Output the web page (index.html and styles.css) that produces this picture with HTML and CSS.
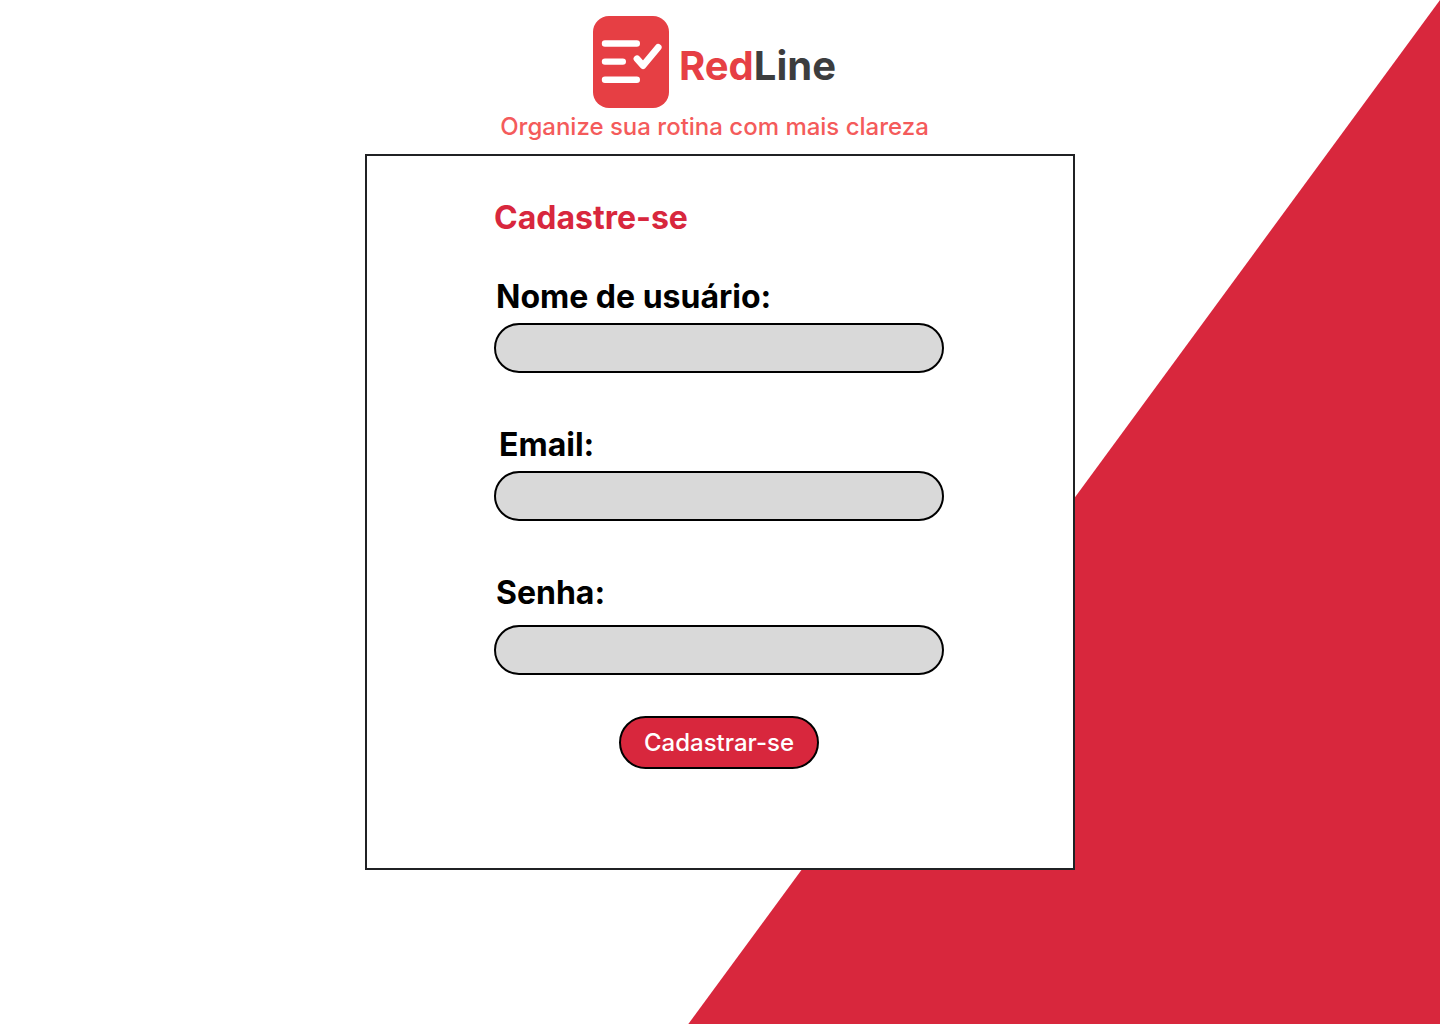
FILE: index.html
```html
<!DOCTYPE html>
<html lang="pt-BR">
<head>
  <meta charset="utf-8">
  <meta name="viewport" content="width=device-width, initial-scale=1">
  <title>RedLine - Cadastre-se</title>
  <link rel="stylesheet" href="styles.css">
</head>
<body>
  <header class="header">
    <div class="brand">
      <svg class="brand-icon" viewBox="0 0 76 92" aria-hidden="true">
        <rect width="76" height="92" rx="16" fill="#e63f44"/>
        <g fill="none" stroke="#fff" stroke-width="6.4" stroke-linecap="round" stroke-linejoin="round">
          <path d="M12 27.5H43.8M12 45.6H29.8M12 63.7H43.8"/>
          <path d="M44 42.800L50 49.600L65.200 31.400" stroke-width="6.800"/>
        </g>
      </svg>
      <span class="brand-name"><span class="brand-red">Red</span>Line</span>
    </div>
    <p class="tagline">Organize sua rotina com mais clareza</p>
  </header>
  <main class="card">
    <form class="form">
      <h1 class="title">Cadastre-se</h1>
      <div class="field">
        <label class="label" for="usuario">Nome de usuário:</label>
        <input class="input" id="usuario" name="usuario" type="text">
      </div>
      <div class="field">
        <label class="label label-inset" for="email">Email:</label>
        <input class="input" id="email" name="email" type="email">
      </div>
      <div class="field field-last">
        <label class="label" for="senha">Senha:</label>
        <input class="input" id="senha" name="senha" type="password">
      </div>
      <button class="submit" type="submit">Cadastrar-se</button>
    </form>
  </main>
</body>
</html>
```
FILE: styles.css
```css
* {
  box-sizing: border-box;
}

body {
  position: relative;
  z-index: 0;
  display: flex;
  flex-direction: column;
  align-items: center;
  min-height: 100vh;
  margin: 0;
  padding: 16px 0;
  background: #fff;
  font-family: Inter, "Liberation Sans", sans-serif;
}

/* Diagonal red area behind the card */
body::before {
  content: "";
  position: absolute;
  inset: 0;
  z-index: -1;
  background: #d8273d;
  clip-path: polygon(100% 0, 100% 100%, 47.8% 100%);
}

.header {
  display: flex;
  flex-direction: column;
  align-items: center;
  gap: 4px;
  padding-right: 11px;
}

.brand {
  display: flex;
  align-items: center;
  gap: 10px;
}

.brand-icon {
  width: 76px;
  height: 92px;
}

.brand-name {
  padding-top: 8px;
  color: #3c3d3e;
  font-size: 40px;
  font-weight: 700;
  line-height: 52px;
}

.brand-red {
  color: #e63f44;
}

.tagline {
  margin: 0;
  color: #f45b5b;
  font-size: 24px;
  font-weight: 500;
  line-height: 30px;
}

.card {
  width: 100%;
  max-width: 710px;
  margin-top: 12px;
  padding: 42px 26px 99px 24px;
  border: 2px solid #202124;
  background: #fff;
}

.form {
  display: flex;
  flex-direction: column;
  max-width: 450px;
  margin: 0 auto;
}

.title {
  margin: 0 0 39px;
  color: #d8273d;
  font-size: 32px;
  font-weight: 700;
  line-height: 40px;
}

.field {
  display: flex;
  flex-direction: column;
  gap: 6px;
  margin-bottom: 52px;
}

.field-last {
  gap: 12px;
  margin-bottom: 41px;
}

.label {
  padding-left: 2px;
  font-size: 32px;
  font-weight: 700;
  line-height: 40px;
}

.label-inset {
  padding-left: 5px;
}

.input {
  width: 100%;
  height: 50px;
  padding: 0 24px;
  border: 2px solid #000;
  border-radius: 25px;
  background: #d9d9d9;
  font: inherit;
  font-size: 24px;
}

.submit {
  align-self: center;
  width: 200px;
  height: 53px;
  padding: 0;
  border: 2px solid #000;
  border-radius: 27px;
  background: #d8273d;
  color: #fff;
  font: inherit;
  font-size: 24px;
  font-weight: 500;
}
```
